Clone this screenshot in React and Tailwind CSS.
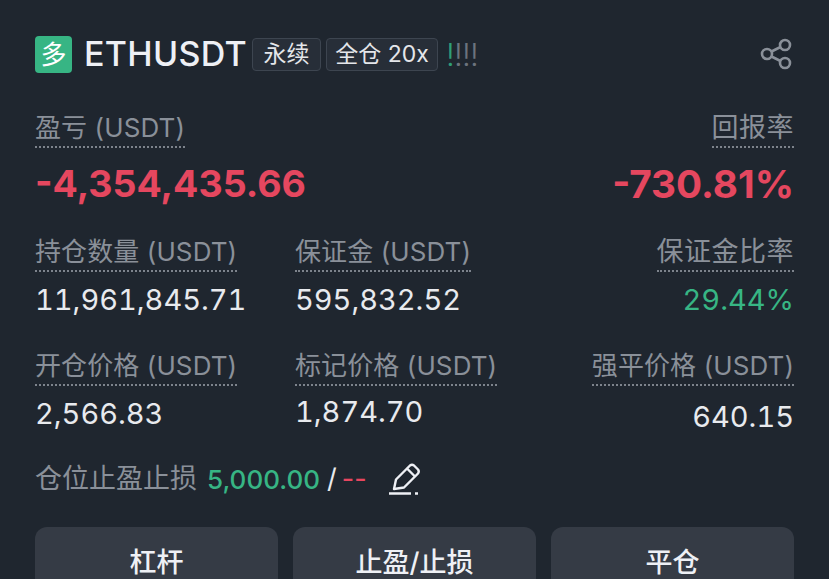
const font = { fontFamily: 'Inter, "Noto Sans CJK SC", sans-serif' };

function Label({ children, right, cjk }) {
  return (
    <div className={right ? "flex justify-end" : "flex"}>
      <span className={`${cjk ? "text-[27px] tracking-[0.5px]" : "text-[26px] tracking-[0.1px]"} leading-[36px] h-[38px] text-[#8a9099] border-b-2 border-dotted border-[#7d838c] whitespace-nowrap`}>
        {children}
      </span>
    </div>
  );
}

function Cell({ label, value, right, cjk, color = "text-[#e8eaee]", gap = "mt-[9px]" }) {
  return (
    <div>
      <Label right={right} cjk={cjk}>{label}</Label>
      <div className={`${gap} text-[29px] leading-[38px] tabular-nums whitespace-nowrap ${color} ${right ? "text-right" : ""}`}>{value}</div>
    </div>
  );
}

export default function App() {
  return (
    <div style={font} className="w-[829px] h-[579px] overflow-hidden bg-[#1f262f] px-[35px] pt-[36px]">
      <div className="flex items-center h-[36px]">
        <div className="w-[37px] h-[37px] rounded-[4px] bg-[#37b584] text-white text-[26px] flex items-center justify-center">多</div>
        <div className="ml-[12px] text-[34px] tracking-[0.3px] font-medium text-[#eef0f5] leading-[36px]">ETHUSDT</div>
        <div className="ml-[5px] h-[33px] w-[69px] justify-center flex items-center rounded-[4px] border border-[#3d4550] bg-[#272e38] text-[#e4e6ea] text-[23px]">永续</div>
        <div className="ml-[5px] h-[33px] w-[112px] justify-center flex items-center rounded-[4px] border border-[#3d4550] bg-[#272e38] text-[#e4e6ea] text-[23px] whitespace-nowrap">全仓 20x</div>
        <div className="ml-[8px] flex text-[31px] leading-none font-light">
          <span className="text-[#2f9e77] w-[8px]">!</span>
          <span className="text-[#6c737d] w-[8px]">!</span>
          <span className="text-[#6c737d] w-[8px]">!</span>
          <span className="text-[#6c737d] w-[8px]">!</span>
        </div>
        <svg className="ml-auto mr-[2px]" width="32" height="32" viewBox="0 0 32 32" fill="none" stroke="#8a9099" strokeWidth="2.6">
          <circle cx="7" cy="16" r="5" />
          <circle cx="25" cy="7" r="5" />
          <circle cx="25" cy="25" r="5" />
          <path d="M11.5 13.5 20.5 9M11.5 18.5 20.5 23" />
        </svg>
      </div>

      <div className="mt-[38px] flex justify-between">
        <Label>盈亏 (USDT)</Label>
        <Label right cjk>回报率</Label>
      </div>
      <div className="mt-[14px] flex justify-between items-center leading-[44px] font-bold text-[#e5475f]">
        <span className="text-[37.5px]">-4,354,435.66</span>
        <span className="text-[38.7px]">-730.81%</span>
      </div>

      <div className="mt-[28px] grid grid-cols-[260px_1fr_auto]">
        <Cell label="持仓数量 (USDT)" value="11,961,845.71" />
        <Cell label="保证金 (USDT)" value="595,832.52" />
        <Cell right cjk label="保证金比率" value="29.44%" color="text-[#37b584]" />
      </div>
      <div className="mt-[29px] grid grid-cols-[260px_1fr_auto]">
        <Cell label="开仓价格 (USDT)" value="2,566.83" />
        <Cell label="标记价格 (USDT)" value="1,874.70" gap="mt-[7px]" />
        <Cell right label="强平价格 (USDT)" value="640.15" gap="mt-[12px]" />
      </div>

      <div className="mt-[25px] flex items-center h-[36px] text-[27px] text-[#8a9099] whitespace-nowrap">
        <span>仓位止盈止损</span>
        <span className="ml-[10px] text-[26px] font-medium text-[#37b584]">5,000.00</span>
        <span className="ml-[7px] text-[#e8eaee]">/</span>
        <span className="ml-[5px] text-[#e8465f]">--</span>
        <svg className="ml-[22px]" width="32" height="34" viewBox="0 0 32 34" fill="none" stroke="#eef0f5" strokeWidth="2.4" strokeLinejoin="round">
          <path d="M5 27 7 17.5 21 3.5Q23 2 25 3.5L29 7.5Q30.5 9.5 29 11.5L15 25.5Z" />
          <path d="M18 6.5 26 14.5" />
          <path d="M0 31.5H22M26 31.5H29" />
        </svg>
      </div>

      <div className="mt-[30px] grid grid-cols-3 gap-x-[15px]">
        {["杠杆", "止盈/止损", "平仓"].map((t) => (
          <div key={t} className="h-[80px] rounded-[12px] bg-[#353b45] text-[#eef0f5] text-[27px] font-medium flex justify-center pt-[17px] leading-[38px]">{t}</div>
        ))}
      </div>
    </div>
  );
}
